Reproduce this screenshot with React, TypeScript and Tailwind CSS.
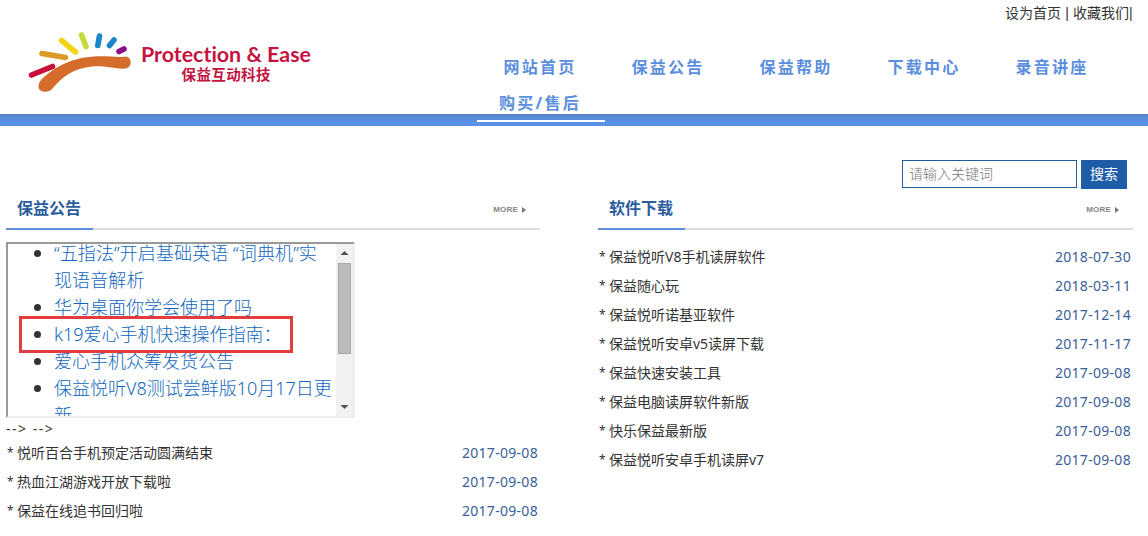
import React from "react";

const navItems = ["网站首页", "保益公告", "保益帮助", "下载中心", "录音讲座", "购买/售后"];

const scrollItems = [
  "“五指法”开启基础英语 “词典机”实现语音解析",
  "华为桌面你学会使用了吗",
  "k19爱心手机快速操作指南：",
  "爱心手机众筹发货公告",
  "保益悦听V8测试尝鲜版10月17日更新",
];

const notices = [
  { title: "悦听百合手机预定活动圆满结束", date: "2017-09-08" },
  { title: "热血江湖游戏开放下载啦", date: "2017-09-08" },
  { title: "保益在线追书回归啦", date: "2017-09-08" },
];

const downloads = [
  { title: "保益悦听V8手机读屏软件", date: "2018-07-30" },
  { title: "保益随心玩", date: "2018-03-11" },
  { title: "保益悦听诺基亚软件", date: "2017-12-14" },
  { title: "保益悦听安卓v5读屏下载", date: "2017-11-17" },
  { title: "保益快速安装工具", date: "2017-09-08" },
  { title: "保益电脑读屏软件新版", date: "2017-09-08" },
  { title: "快乐保益最新版", date: "2017-09-08" },
  { title: "保益悦听安卓手机读屏v7", date: "2017-09-08" },
];

type Row = { title: string; date: string };

const Logo = () => (
  <svg width="300" height="70" viewBox="20 25 300 70" className="block">
    <g strokeLinecap="round" strokeWidth="5.6" fill="none">
      <path d="M31.5 75 52.5 66.5" stroke="#c8103c" />
      <path d="M42 53.5 65.5 57.5" stroke="#dd9a26" />
      <path d="M61.5 40.5 75.5 52" stroke="#f2d417" />
      <path d="M81.5 35 86 46.5" stroke="#c5dc3c" />
      <path d="M99.5 36 97.8 45.5" stroke="#1b86c8" />
      <path d="M114 40 109.5 45.5" stroke="#1b86c8" />
      <path d="M124 49 119 51.5" stroke="#8c0d87" />
    </g>
    <path
      d="M41 80 C51 70 68 58 94 56.5 C108 55.5 118 58 126 56.5 C132 57 132.500 67 126 68.500 C116 69.500 106 65.500 92 66.500 C74 68 62 77 53 88 C48 94.500 38 92 38.500 86 C38.500 83 40 82 41 80 Z"
      fill="#d66c2c"
    />
    <text
      x="141"
      y="61.5"
      fontSize="20.5"
      fontWeight="700"
      textLength="170"
      lengthAdjust="spacingAndGlyphs"
      fill="#c4143f"
      className="font-['Lato',sans-serif] [font-variant-ligatures:none]"
    >
      Protection &amp; Ease
    </text>
    <text
      x="181.5"
      y="79.5"
      fontSize="14.5"
      fontWeight="700"
      textLength="89"
      fill="#c4143f"
      className="font-['Noto_Sans_CJK_SC',sans-serif]"
    >
      保益互动科技
    </text>
  </svg>
);

const SectionTitle = ({ title }: { title: string }) => (
  <div className="flex h-[35px] border-b-2 border-[#dcdcdc]">
    <h2 className="h-[35px] w-[87px] border-b-2 border-[#5b90e0] pl-[11px] text-base leading-[26px] font-bold text-[#2a5c9e]">
      {title}
    </h2>
    <a className="mt-[11px] mr-3.5 ml-auto flex h-2 items-center gap-1 font-['Liberation_Sans',sans-serif] text-[8px] leading-[8px] font-bold tracking-[0.2px] text-[#858585]">
      MORE
      <svg width="4" height="6" viewBox="0 0 4 6">
        <path d="M0 0 4 3 0 6Z" fill="#777" />
      </svg>
    </a>
  </div>
);

const NewsList = ({ rows }: { rows: Row[] }) => (
  <ul>
    {rows.map((row) => (
      <li key={row.title} className="flex h-[29px] items-center justify-between pr-0.5 pl-px text-sm">
        <span className="text-[#333]">
          <span className="inline-block w-2.5 align-[1px] text-[12px] leading-none">*</span>
          {row.title}
        </span>
        <span className="tracking-[0.3px] text-[#3a6099]">{row.date}</span>
      </li>
    ))}
  </ul>
);

const NoticeBox = () => (
  <div className="relative flex h-[176px] w-[349px] border-2 border-t-[#999] border-r-[#eee] border-b-[#eee] border-l-[#999]">
    <div className="h-full w-[328px] overflow-hidden">
      <ul className="-mt-1 pl-[46px] text-[18px] leading-[27px] font-light text-[#0f66bd]">
        {scrollItems.map((item, i) => (
          <li key={item} className={i === 0 ? "relative pr-2.5 tracking-[0.1px]" : "relative"}>
            <span className="absolute top-[10px] -left-[20px] size-[7px] rounded-full bg-[#333]" />
            {item}
          </li>
        ))}
      </ul>
    </div>
    <div className="flex h-full w-[17px] flex-col items-center bg-[#f1f1f1]">
      <svg width="17" height="19" viewBox="0 0 17 19" className="block">
        <path d="M4.5 11 8.5 7 12.5 11Z" fill="#505050" />
      </svg>
      <div className="h-[91px] w-[13px] border border-[#a8a8a8] bg-[#bcbcbc]" />
      <svg width="17" height="17" viewBox="0 0 17 17" className="mt-auto block">
        <path d="M4.5 6 8.5 10 12.5 6Z" fill="#505050" />
      </svg>
    </div>
    <div className="absolute top-[72px] left-[11px] h-[37px] w-[274px] border-[3px] border-[#e23c3c]" />
  </div>
);

const App = () => {
  return (
    <div className="h-[536px] w-[1148px] overflow-hidden bg-white font-['Noto_Sans','Noto_Sans_CJK_SC',sans-serif] text-[#333]">
      <header>
        <div className="flex h-[114px]">
          <div className="mt-[25px] ml-5 w-[457px] shrink-0">
            <Logo />
          </div>
          <div className="w-[671px]">
            <div className="h-[49px] pt-[3px] pr-4 text-right text-sm leading-5">
              设为首页<span className="mx-1 inline-block w-1 text-center font-['Liberation_Sans',sans-serif]">|</span>收藏我们
              <span className="inline-block w-[3px] font-['Liberation_Sans',sans-serif]">|</span>
            </div>
            <nav className="flex flex-wrap">
              {navItems.map((item) => (
                <a
                  key={item}
                  className="h-9 w-32 pr-0.5 text-center text-base leading-9 font-bold tracking-[2.3px] text-[#5b8fdd]"
                >
                  {item}
                </a>
              ))}
            </nav>
          </div>
        </div>
        <div className="h-3 bg-linear-to-b from-[#5585c6] to-[#5b90e6] to-60% pt-1.5 pl-[477px]">
          <div className="h-0.5 w-32 bg-white" />
        </div>
      </header>

      <div className="mt-[34px] mr-[21px] flex justify-end gap-1">
        <input
          placeholder="请输入关键词"
          className="h-7 w-[175px] border border-[#205c9f] px-1.5 pb-0.5 text-sm font-light outline-none placeholder:text-[#777]"
        />
        <button className="h-[29px] w-[46px] bg-[#1e5ca8] pb-0.5 text-sm text-white">搜索</button>
      </div>

      <main className="mt-1.5 flex gap-[58px] pl-1.5">
        <section className="w-[534px]">
          <SectionTitle title="保益公告" />
          <div className="mt-3">
            <NoticeBox />
          </div>
          <p className="h-5 text-sm leading-[22px] tracking-[1.5px]">--&gt; --&gt;</p>
          <NewsList rows={notices} />
        </section>
        <section className="w-[535px]">
          <SectionTitle title="软件下载" />
          <div className="mt-3">
            <NewsList rows={downloads} />
          </div>
        </section>
      </main>
    </div>
  );
};

export default App;
